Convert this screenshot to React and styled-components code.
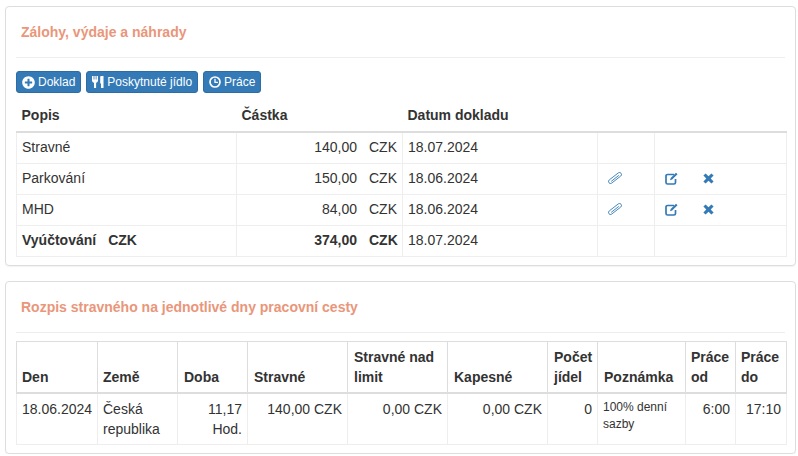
import React from "react";
import styled, { createGlobalStyle } from "styled-components";
import { FaPlusCircle } from "react-icons/fa";

const GlobalStyle = createGlobalStyle`
  html, body {
    margin: 0;
    padding: 0;
    background: #fff;
  }
  body {
    font-family: "Liberation Sans", Arial, sans-serif;
    font-size: 14px;
    line-height: 20px;
    color: #333;
  }
`;

// Icons
const CutleryIcon = () => (
  <svg width="12" height="12" viewBox="1 0 12 12" fill="#fff">
    <path d="M1 0h1.600v3.500h.8V0h1.300v3.500h.8V0h1.500v4.500c0 1.200-.9 2-1.900 2.300V12H3V6.800C1.900 6.500 1 5.700 1 4.500z" />
    <path d="M10 0h2.500v12H10V7.500H9.200V1.500C9.200.7 9.500 0 10 0z" />
  </svg>
);

const ClockIcon = () => (
  <svg width="12" height="12" viewBox="0 0 12 12" fill="none" stroke="#fff">
    <circle cx="6" cy="6" r="5" strokeWidth="1.700" />
    <path d="M6 2.800v3.600h2.900" strokeWidth="1.300" />
  </svg>
);

const ClipIcon = () => (
  <svg width="14" height="12" viewBox="0 0 14 12" fill="none" stroke="#337ab7" strokeWidth="0.9">
    <path d="M1.300 7.900 10.300.9a2 2 0 0 1 2.400 3.200L3.700 11.100a2 2 0 0 1-2.400-3.200z" />
    <path d="M3.200 9.400 10.800 3.400" />
  </svg>
);

const EditIcon = () => (
  <svg width="13" height="13" viewBox="0 0 13 13">
    <path
      d="M9 2.500H2.600C1.700 2.500 1 3.200 1 4.100v6.300c0 .9.700 1.600 1.600 1.600h6.300c.9 0 1.600-.7 1.600-1.600V7"
      fill="none"
      stroke="#337ab7"
      strokeWidth="1.700"
    />
    <path d="M11 .8 12.500 2.300 7.200 7.600 5 8.300 5.700 6z" fill="#337ab7" />
  </svg>
);

const RemoveIcon = () => (
  <svg width="11" height="11" viewBox="0 0 11 11" fill="#337ab7">
    <path d="M2.600.4 5.500 3.300 8.400.4l2.200 2.200-2.900 2.900 2.900 2.900-2.200 2.200-2.900-2.900-2.900 2.900L.4 8.400l2.900-2.900L.4 2.600z" />
  </svg>
);

const Page = styled.div`
  display: flex;
  flex-direction: column;
  gap: 15px;
  padding: 6px 2px 0 5px;
`;

const Panel = styled.section`
  border: 1px solid #ddd;
  border-radius: 4px;
  box-shadow: 0 1px 1px rgba(0, 0, 0, 0.05);
  padding: 0 10px 8px;
`;

const Title = styled.h3`
  margin: 0;
  height: 51px;
  padding: 15px 0 0 5px;
  box-sizing: border-box;
  border-bottom: 1px solid #eee;
  font-size: 14px;
  line-height: 20px;
  font-weight: 700;
  color: #e9967a;
`;

const Toolbar = styled.div`
  display: flex;
  gap: 5px;
  margin-top: 13px;
`;

const Button = styled.button`
  display: inline-flex;
  align-items: center;
  gap: 3px;
  height: 22px;
  padding: 0 5px;
  border: 1px solid #2e6da4;
  border-radius: 3px;
  background: #337ab7;
  color: #fff;
  font-family: inherit;
  font-size: 12px;
  line-height: 18px;
  white-space: nowrap;
`;

const Table = styled.table`
  width: 770px;
  table-layout: fixed;
  border-collapse: collapse;
  border-spacing: 0;
  margin-top: ${(p) => p.$top}px;
  border: ${(p) => (p.$framed ? "1px solid #ddd" : "0")};
  ${(p) =>
    !p.$framed &&
    `
    th { padding-bottom: 6px; }
    td { padding-top: 4px; padding-bottom: 6px; }
  `}
`;

const Col = styled.col`
  width: ${(p) => p.$w}px;
`;

const Th = styled.th`
  padding: 5px;
  text-align: left;
  vertical-align: bottom;
  font-weight: 700;
  border-bottom: 2px solid #ddd;
  border-left: ${(p) => (p.$framed ? "1px solid #ddd" : "0")};
  border-right: ${(p) => (p.$framed ? "1px solid #ddd" : "0")};
  &:nth-child(n + 3):nth-child(-n + 8) {
    padding-left: ${(p) => (p.$framed ? 6 : 5)}px;
  }
`;

const Td = styled.td`
  padding: 5px;
  border: 1px solid #eee;
  text-align: ${(p) => (p.$right ? "right" : "left")};
  vertical-align: top;
  font-weight: ${(p) => (p.$bold ? 700 : 400)};
  white-space: ${(p) => (p.$nowrap ? "nowrap" : "normal")};
`;

const Money = styled.span`
  display: inline-block;
  width: 28px;
  margin-left: 12px;
  text-align: left;
`;

const Code = styled.span`
  margin-left: 12px;
`;

const Note = styled.span`
  display: block;
  font-size: 12px;
  line-height: 17px;
`;

const IconRow = styled.div`
  display: flex;
  align-items: center;
  height: 20px;
  padding-left: ${(p) => p.$pad}px;
  gap: 25px;
`;

const expenses = [
  { name: "Stravné", amount: "140,00", date: "18.07.2024" },
  { name: "Parkování", amount: "150,00", date: "18.06.2024", tools: true },
  { name: "MHD", amount: "84,00", date: "18.06.2024", tools: true },
];

const dayHeads = ["Den", "Země", "Doba", "Stravné", "Stravné nad limit", "Kapesné", "Počet jídel", "Poznámka", "Práce od", "Práce do"];
const dayWidths = [81, 80, 70, 100, 100, 100, 50, 88, 50, 51];

export default function App() {
  return (
    <>
      <GlobalStyle />
      <Page>
        <Panel>
          <Title>Zálohy, výdaje a náhrady</Title>
          <Toolbar>
            <Button>
              <FaPlusCircle size={13} /> Doklad
            </Button>
            <Button>
              <CutleryIcon /> Poskytnuté jídlo
            </Button>
            <Button>
              <ClockIcon /> Práce
            </Button>
          </Toolbar>
          <Table $top={7}>
            <colgroup>
              <Col $w={220} />
              <Col $w={166} />
              <Col $w={195} />
              <Col $w={57} />
              <Col $w={132} />
            </colgroup>
            <thead>
              <tr>
                <Th>Popis</Th>
                <Th>Částka</Th>
                <Th>Datum dokladu</Th>
                <Th />
                <Th />
              </tr>
            </thead>
            <tbody>
              {expenses.map((row) => (
                <tr key={row.name}>
                  <Td>{row.name}</Td>
                  <Td $right>
                    {row.amount}
                    <Money>CZK</Money>
                  </Td>
                  <Td>{row.date}</Td>
                  <Td>
                    {row.tools && (
                      <IconRow $pad={5}>
                        <ClipIcon />
                      </IconRow>
                    )}
                  </Td>
                  <Td>
                    {row.tools && (
                      <IconRow $pad={5}>
                        <EditIcon />
                        <RemoveIcon />
                      </IconRow>
                    )}
                  </Td>
                </tr>
              ))}
              <tr>
                <Td $bold>
                  Vyúčtování<Code>CZK</Code>
                </Td>
                <Td $right $bold>
                  374,00
                  <Money>CZK</Money>
                </Td>
                <Td>18.07.2024</Td>
                <Td />
                <Td />
              </tr>
            </tbody>
          </Table>
        </Panel>
        <Panel>
          <Title>Rozpis stravného na jednotlivé dny pracovní cesty</Title>
          <Table $top={8} $framed>
            <colgroup>
              {dayWidths.map((w, i) => (
                <Col key={i} $w={w} />
              ))}
            </colgroup>
            <thead>
              <tr>
                {dayHeads.map((head) => (
                  <Th key={head} $framed>
                    {head}
                  </Th>
                ))}
              </tr>
            </thead>
            <tbody>
              <tr>
                <Td $nowrap>18.06.2024</Td>
                <Td>Česká republika</Td>
                <Td $right>11,17 Hod.</Td>
                <Td $right $nowrap>140,00 CZK</Td>
                <Td $right $nowrap>0,00 CZK</Td>
                <Td $right $nowrap>0,00 CZK</Td>
                <Td $right>0</Td>
                <Td>
                  <Note>100% denní sazby</Note>
                </Td>
                <Td $right>6:00</Td>
                <Td $right>17:10</Td>
              </tr>
            </tbody>
          </Table>
        </Panel>
      </Page>
    </>
  );
}
